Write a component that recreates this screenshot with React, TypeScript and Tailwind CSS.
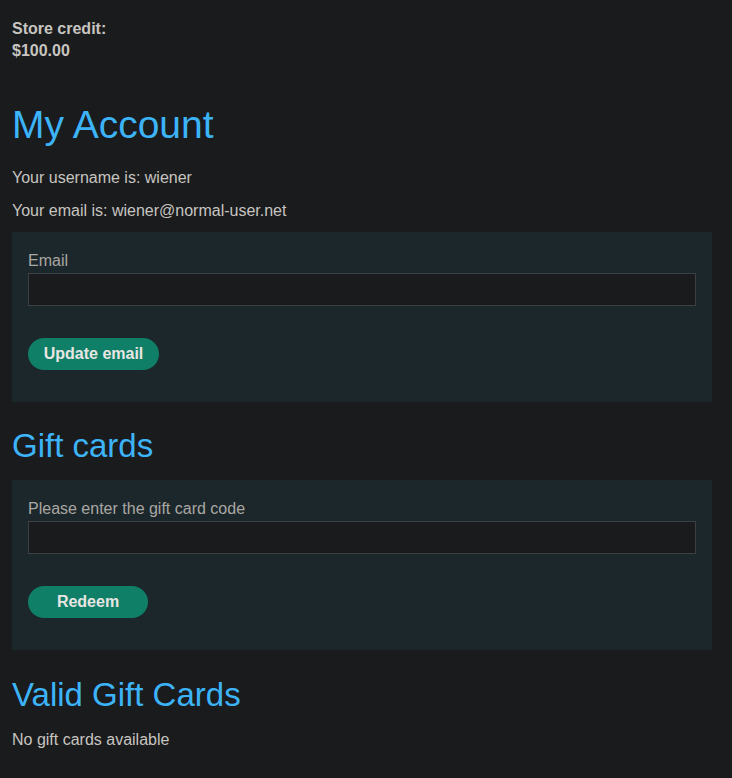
import React from 'react';

const App = () => {
  return (
    <div className="min-h-[778px] bg-[#1a1b1d] pl-3 pr-5 pt-[18px] pb-4 font-['Liberation_Sans',Arial,sans-serif] text-base leading-[22px] text-[#c7c5c0]">
      <div className="font-bold">
        <p>Store credit:</p>
        <p>$100.00</p>
      </div>

      <h1 className="mt-[39px] text-[39px] leading-[47px] text-[#3db4f8]">My Account</h1>
      <p className="mt-[19px]">Your username is: wiener</p>
      <p className="mt-[11px]">Your email is: wiener@normal-user.net</p>

      <form className="mt-[10px] flex h-[170px] flex-col bg-[#1c272c] px-4 pt-[18px]">
        <label className="leading-[22px] text-[#aaa7a2]">Email</label>
        <input className="mt-[1px] h-[33px] w-full border border-[#3b4042] bg-[#1a1b1d] px-2 outline-none" />
        <button
          type="button"
          className="mt-[32px] h-8 w-[131px] rounded-full bg-[#107f68] font-bold text-[#e8e6e2]"
        >
          Update email
        </button>
      </form>

      <h2 className="mt-[24px] text-[33px] leading-[40px] text-[#3db4f8]">Gift cards</h2>

      <form className="mt-[14px] flex h-[170px] flex-col bg-[#1c272c] px-4 pt-[18px]">
        <label className="leading-[22px] text-[#aaa7a2]">Please enter the gift card code</label>
        <input className="mt-[1px] h-[33px] w-full border border-[#3b4042] bg-[#1a1b1d] px-2 outline-none" />
        <button
          type="button"
          className="mt-[32px] h-8 w-[120px] rounded-full bg-[#107f68] font-bold text-[#e8e6e2]"
        >
          Redeem
        </button>
      </form>

      <h2 className="mt-[25px] text-[33px] leading-[40px] text-[#3db4f8]">Valid Gift Cards</h2>
      <p className="mt-[14px]">No gift cards available</p>
    </div>
  );
};

export default App;
